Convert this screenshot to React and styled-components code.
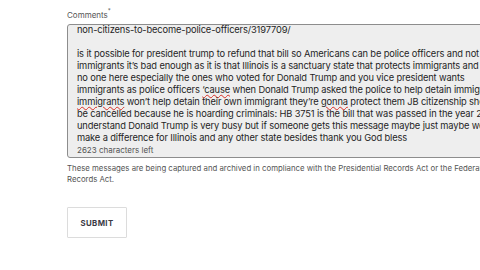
import React from "react";
import styled, { createGlobalStyle } from "styled-components";

const GlobalStyle = createGlobalStyle`
  html, body {
    margin: 0;
    padding: 0;
    background: #ffffff;
    overflow: hidden;
  }
  body {
    font-family: Inter, "Liberation Sans", sans-serif;
  }
`;

const Page = styled.div`
  width: 480px;
  height: 270px;
  overflow: hidden;
  padding: 10px 0 0 67px;
  box-sizing: border-box;
`;

const Form = styled.form`
  width: 440px;
  display: flex;
  flex-direction: column;
`;

const Label = styled.label`
  font-size: 8px;
  line-height: 10px;
  color: #555;
  margin-bottom: 4px;
  sup {
    font-size: 6px;
    line-height: 0;
    vertical-align: top;
    position: relative;
    top: 1px;
  }
`;

const TextBox = styled.div`
  height: 134px;
  box-sizing: border-box;
  border: 1px solid #8d8d8d;
  border-radius: 3px;
  background: #eeeeee;
  padding: 0 0 0 9px;
  overflow: hidden;
  display: flex;
  flex-direction: column;
`;

const Content = styled.div`
  font-size: 9.3px;
  letter-spacing: -0.13px;
  line-height: 12px;
  color: #1f1f1f;
  white-space: pre;
  margin-top: -1px;
`;

const Line = styled.div`
  height: 12px;
`;

const Misspelled = styled.span`
  text-decoration: underline wavy #d93025;
  text-decoration-thickness: 1px;
  text-underline-offset: 1px;
`;

const Counter = styled.div`
  font-size: 8px;
  line-height: 10px;
  color: #555;
  margin-top: 1px;
`;

const Notice = styled.p`
  margin: 5px 0 0;
  font-size: 7.8px;
  line-height: 11px;
  color: #555;
`;

const SubmitButton = styled.button`
  margin-top: 22px;
  width: 60px;
  height: 31px;
  background: #ffffff;
  border: 1px solid #dcdcdc;
  border-radius: 1px;
  font-family: Inter, "Liberation Sans", sans-serif;
  font-size: 7.8px;
  font-weight: 700;
  letter-spacing: 0.4px;
  color: #3a3a44;
  cursor: pointer;
  padding: 0;
`;

function App() {
  return (
    <Page>
      <GlobalStyle />
      <Form onSubmit={(e) => e.preventDefault()}>
        <Label>
          Comments<sup>*</sup>
        </Label>
        <TextBox>
          <Content>
            <Line>non-citizens-to-become-police-officers/3197709/</Line>
            <Line> </Line>
            <Line>
              is it possible for president trump to refund that bill so Americans can be police officers and not immigrants
            </Line>
            <Line>
              immigrants it’s bad enough as it is that Illinois is a sanctuary state that protects immigrants and
            </Line>
            <Line>
              no one here especially the ones who voted for Donald Trump and you vice president wants
            </Line>
            <Line>
              immigrants as police officers <Misspelled>‘cause</Misspelled> when Donald Trump asked the police to help detain immigrants
            </Line>
            <Line>
              <Misspelled>immigrants</Misspelled> won’t help detain their own immigrant they’re <Misspelled>gonna</Misspelled> protect them JB citizenship should
            </Line>
            <Line>
              be cancelled because he is hoarding criminals: HB 3751 is the bill that was passed in the year 2023
            </Line>
            <Line>
              understand Donald Trump is very busy but if someone gets this message maybe just maybe we
            </Line>
            <Line>
              make a difference for Illinois and any other state besides thank you God bless
            </Line>
          </Content>
          <Counter>2623 characters left</Counter>
        </TextBox>
        <Notice>
          These messages are being captured and archived in compliance with the Presidential Records Act or the Federal Records Act.
        </Notice>
        <div>
          <SubmitButton type="submit">SUBMIT</SubmitButton>
        </div>
      </Form>
    </Page>
  );
}

export default App;
